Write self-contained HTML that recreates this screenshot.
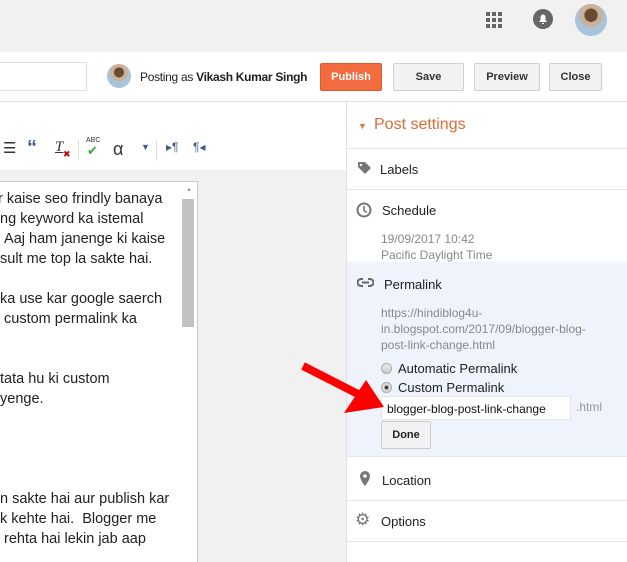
<!DOCTYPE html>
<html><head><style>
*{margin:0;padding:0;box-sizing:border-box}
body{width:627px;height:562px;overflow:hidden;font-family:"Liberation Sans",Arial,sans-serif;background:#fff;position:relative}
.abs{position:absolute}
.btn{position:absolute;top:63px;height:28px;border:1px solid #d0d0d0;background:#f2f2f2;border-radius:2px;font-weight:bold;font-size:11px;color:#333;text-align:center;line-height:26px}
.ptxt{font-size:13px;color:#222}
.gray{color:#888;font-size:12px;line-height:16px}
.sep{position:absolute;left:347px;width:280px;height:1px;background:#e5e5e5}
.ed{font-size:14.5px;color:#222;line-height:20px;white-space:nowrap}
</style></head><body>
<div class="abs" style="left:0;top:0;width:627px;height:52px;background:#f1f1f1"></div>
<svg class="abs" style="left:486px;top:12px" width="16" height="16"><g fill="#666">
<rect x="0" y="0" width="4" height="4"/><rect x="6" y="0" width="4" height="4"/><rect x="12" y="0" width="4" height="4"/>
<rect x="0" y="6" width="4" height="4"/><rect x="6" y="6" width="4" height="4"/><rect x="12" y="6" width="4" height="4"/>
<rect x="0" y="12" width="4" height="4"/><rect x="6" y="12" width="4" height="4"/><rect x="12" y="12" width="4" height="4"/></g></svg>
<svg class="abs" style="left:532px;top:8px" width="22" height="22"><circle cx="11" cy="11" r="10" fill="#666"/><path d="M7 14h8l-1.5-2v-3a2.5 2.5 0 0 0-5 0v3z M10 15h2v1h-2z" fill="#fff"/></svg>
<div class="abs" style="left:575px;top:4px;width:32px;height:32px;border-radius:50%;background:radial-gradient(circle at 50% 35%,#6b4a32 0 25%,#c9b29a 26% 45%,#a8c4dc 46%)"></div>
<div class="abs" style="left:0;top:62px;width:87px;height:29px;border:1px solid #ddd;border-left:none;background:#fff"></div>
<div class="abs" style="left:107px;top:64px;width:24px;height:24px;border-radius:50%;background:radial-gradient(circle at 50% 35%,#6b4a32 0 25%,#c9b29a 26% 45%,#a8c4dc 46%)"></div>
<div class="abs" style="left:140px;top:70px;font-size:12px;letter-spacing:-0.3px;color:#222;white-space:nowrap">Posting as <b>Vikash Kumar Singh</b></div>
<div class="btn" style="left:320px;width:62px;background:#f26c3f;border-color:#e05a2e;color:#fff">Publish</div>
<div class="btn" style="left:393px;width:71px">Save</div>
<div class="btn" style="left:474px;width:66px">Preview</div>
<div class="btn" style="left:549px;width:53px">Close</div>
<div class="abs" style="left:0;top:101px;width:627px;height:1px;background:#e0e0e0"></div>
<div class="abs" style="left:0;top:139px;font-size:15px;color:#333">
<span class="abs" style="left:3px;top:0">☰</span>
<span class="abs" style="left:27px;top:-2px;color:#3d5a8a;font-weight:bold;font-size:20px">“</span>
<span class="abs" style="left:55px;top:0;font-style:italic;font-family:'Liberation Serif',serif;text-decoration:underline">T</span>
<span class="abs" style="left:63px;top:10px;color:#c00;font-size:9px">✖</span>
<span class="abs" style="left:86px;top:-2px;font-size:7px;color:#333">ABC</span>
<span class="abs" style="left:87px;top:4px;color:#3a3;font-size:13px">✔</span>
<span class="abs" style="left:113px;top:0;font-size:18px">α</span>
<span class="abs" style="left:141px;top:3px;font-size:9px;color:#3d5a8a">▼</span>
<span class="abs" style="left:166px;top:1px;font-size:12px;color:#3d5a8a">▸¶</span>
<span class="abs" style="left:193px;top:1px;font-size:12px;color:#3d5a8a">¶◂</span>
</div>
<div class="abs" style="left:78px;top:140px;width:1px;height:20px;background:#ddd"></div>
<div class="abs" style="left:156px;top:140px;width:1px;height:20px;background:#ddd"></div>
<div class="abs" style="left:0;top:170px;width:346px;height:392px;background:#f1f1f1"></div>
<div class="abs" style="left:0;top:181px;width:198px;height:381px;background:#fff;border-right:1px solid #ccc;border-top:1px solid #ccc"></div>
<div class="abs" style="left:182px;top:199px;width:12px;height:128px;background:#c2c2c2"></div>
<div class="abs" style="left:186px;top:187px;font-size:6px;color:#999">▲</div>
<div class="abs ed" style="left:0;top:189px;width:178px;overflow:hidden">
<div style="margin-left:-2px">r kaise seo frindly banaya</div>
<div>ng keyword ka istemal</div>
<div>&nbsp;Aaj ham janenge ki kaise</div>
<div>sult me top la sakte hai.</div>
<div>&nbsp;</div>
<div>ka use kar google saerch</div>
<div>&nbsp;custom permalink ka</div>
<div>&nbsp;</div>
<div>&nbsp;</div>
<div>tata hu ki custom</div>
<div>yenge.</div>
<div>&nbsp;</div><div>&nbsp;</div><div>&nbsp;</div><div>&nbsp;</div>
<div>n sakte hai aur publish kar</div>
<div>k kehte hai.&nbsp; Blogger me</div>
<div>&nbsp;rehta hai lekin jab aap</div>
</div>
<div class="abs" style="left:346px;top:101px;width:1px;height:461px;background:#e0e0e0"></div>
<div class="abs" style="left:358px;top:121px;font-size:9px;color:#e0773f">▼</div>
<div class="abs" style="left:374px;top:116px;font-size:16px;color:#dd6b36">Post settings</div>
<div class="sep" style="top:148px"></div>
<svg class="abs" style="left:357px;top:161px" width="15" height="15"><path d="M1 1h7l6 6-6 6-7-7z" fill="#777"/><circle cx="4" cy="4" r="1.2" fill="#fff"/></svg>
<div class="abs ptxt" style="left:380px;top:162px">Labels</div>
<div class="sep" style="top:189px"></div>
<svg class="abs" style="left:356px;top:202px" width="16" height="16"><circle cx="8" cy="8" r="6.5" fill="none" stroke="#777" stroke-width="2"/><path d="M8 4v4.5l3 2" fill="none" stroke="#777" stroke-width="1.6"/></svg>
<div class="abs ptxt" style="left:382px;top:203px">Schedule</div>
<div class="abs gray" style="left:381px;top:231px">19/09/2017 10:42<br>Pacific Daylight Time</div>
<div class="abs" style="left:347px;top:262px;width:280px;height:194px;background:#eef3fc"></div>
<svg class="abs" style="left:357px;top:278px" width="17" height="10"><path d="M6 1H4a3.5 3.5 0 0 0 0 7h2M11 1h2a3.5 3.5 0 0 1 0 7h-2M5 4.5h7" fill="none" stroke="#666" stroke-width="2"/></svg>
<div class="abs ptxt" style="left:384px;top:277px">Permalink</div>
<div class="abs gray" style="left:381px;top:305px;line-height:16px">https://hindiblog4u-<br>in.blogspot.com/2017/09/blogger-blog-<br>post-link-change.html</div>
<div class="abs" style="left:381px;top:363px;width:11px;height:11px;border-radius:50%;border:1px solid #aaa;background:linear-gradient(#eee,#ccc)"></div>
<div class="abs ptxt" style="left:398px;top:361px">Automatic Permalink</div>
<div class="abs" style="left:381px;top:382px;width:11px;height:11px;border-radius:50%;border:1px solid #aaa;background:radial-gradient(#444 0 28%,#ddd 35%)"></div>
<div class="abs ptxt" style="left:398px;top:380px">Custom Permalink</div>
<div class="abs" style="left:381px;top:396px;width:190px;height:24px;background:#fff;border:1px solid #e5e5e5;font-size:12px;padding:5px 0 0 5px;color:#111">blogger-blog-post-link-change</div>
<div class="abs" style="left:576px;top:400px;font-size:12px;color:#999">.html</div>
<div class="abs" style="left:381px;top:421px;width:50px;height:28px;background:#f2f2f2;border:1px solid #ccc;border-radius:2px;font-size:11px;font-weight:bold;text-align:center;line-height:26px;color:#222">Done</div>
<div class="sep" style="top:456px"></div>
<svg class="abs" style="left:359px;top:471px" width="12" height="16"><path d="M6 0a5 5 0 0 0-5 5c0 4 5 10 5 10s5-6 5-10a5 5 0 0 0-5-5z" fill="#777"/><circle cx="6" cy="5" r="1.8" fill="#fff"/></svg>
<div class="abs ptxt" style="left:382px;top:473px">Location</div>
<div class="sep" style="top:500px"></div>
<div class="abs" style="left:355px;top:510px;font-size:17px;color:#777">⚙</div>
<div class="abs ptxt" style="left:381px;top:514px">Options</div>
<div class="sep" style="top:541px"></div>
<svg class="abs" style="left:0;top:0" width="627" height="562"><line x1="303" y1="366" x2="358" y2="394" stroke="#f00" stroke-width="8"/><polygon points="384,407 344,413 366,380" fill="#f00"/></svg>
</body></html>
